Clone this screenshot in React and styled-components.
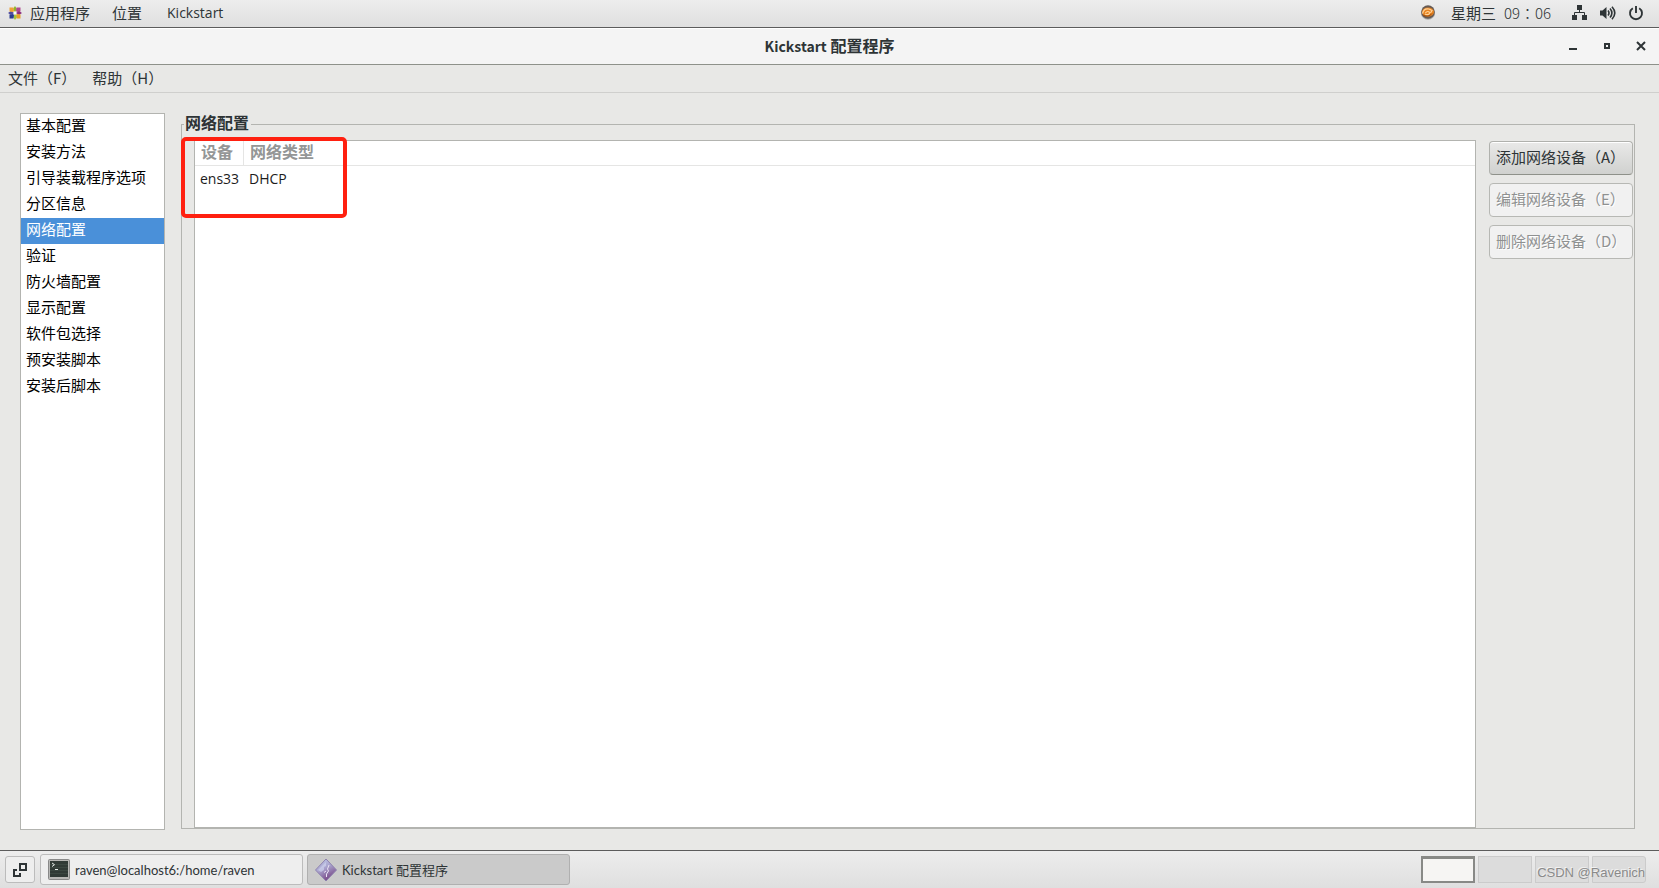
import React from "react";
import styled, { createGlobalStyle } from "styled-components";

const latin = `"Open Sans", "Noto Sans CJK SC", sans-serif`;
const cjk = `"Noto Sans CJK SC", sans-serif`;

const GlobalStyle = createGlobalStyle`
  * { box-sizing: border-box; }
  body { margin: 0; background: #e8e8e6; color: #2e3436; font: 15px/20px ${cjk}; }
  button { font: inherit; color: inherit; margin: 0; cursor: default; }
`;

const Desktop = styled.div`
  display: flex;
  flex-direction: column;
  min-height: 100vh;
`;

const TopPanel = styled.header`
  display: flex;
  align-items: center;
  height: 28px;
  padding: 0 15px 2px 8px;
  background: linear-gradient(#ededed, #dfdfdf);
  border-bottom: 1px solid #5c5c5c;
`;

const PanelButton = styled.button`
  display: flex;
  align-items: center;
  gap: 8px;
  padding: 0;
  margin-right: ${(p) => p.$after || 0}px;
  border: 0;
  background: none;
`;

const Latin = styled.span`
  font-family: ${latin};
  font-size: 14px;
`;

const Tray = styled.div`
  display: flex;
  align-items: center;
  margin-left: auto;
`;

const TitleBar = styled.div`
  display: grid;
  grid-template-columns: 1fr auto 1fr;
  align-items: center;
  height: 37px;
  padding: 0 11px 2px;
  background: #f4f4f4;
  border-top: 1px solid #fff;
  border-bottom: 1px solid #8e918a;
`;

const WindowTitle = styled.h1`
  grid-column: 2;
  margin: 0;
  font: 700 16px/20px ${cjk};
`;

const TitleLatin = styled.span`
  font-size: 14px;
`;

const WindowControls = styled.div`
  display: flex;
  justify-content: flex-end;
  gap: 20px;
`;

const ControlButton = styled.button`
  display: flex;
  padding: 0;
  border: 0;
  background: none;
`;

const MenuBar = styled.nav`
  display: flex;
  gap: 16px;
  height: 28px;
  padding: 0 8px;
  border-bottom: 1px solid #cfcfcd;
`;

const MenuItem = styled.button`
  padding: 0 0 2px;
  border: 0;
  background: none;
`;

const Content = styled.main`
  display: flex;
  flex: 1;
  gap: 16px;
  padding: 20px 24px 20px 20px;
`;

const SideList = styled.ul`
  flex: none;
  width: 145px;
  margin: 0;
  padding: 0;
  list-style: none;
  background: #fff;
  border: 1px solid #b3b4b0;
`;

const SideItem = styled.li`
  display: flex;
`;

const SideButton = styled.button`
  flex: 1;
  height: 26px;
  padding: 0 5px 4px;
  border: 0;
  text-align: left;
  white-space: nowrap;
  color: ${(p) => (p.$active ? "#fff" : "#000")};
  background: ${(p) => (p.$active ? "#4a90d9" : "#fff")};
`;

const Frame = styled.fieldset`
  position: relative;
  display: flex;
  flex: 1;
  gap: 13px;
  min-width: 0;
  margin: 0 0 1px;
  padding: 4px 1px 0 12px;
  border: 1px solid #b3b4b0;
`;

const Legend = styled.legend`
  margin-left: -10px;
  padding: 0 2px 5px 1px;
  font-size: 16px;
  font-weight: 700;
  line-height: 18px;
`;

const TreeBox = styled.div`
  flex: 1;
  background: #fff;
  border: 1px solid #b3b4b0;
`;

const DeviceTable = styled.table`
  width: 100%;
  border-collapse: separate;
  border-spacing: 0;
`;

const HeadCell = styled.th`
  width: ${(p) => p.$width || "auto"};
  height: 25px;
  padding: 0 5px 4px 6px;
  border-bottom: 1px solid #e5e5e4;
  border-right: ${(p) => (p.$width ? "1px solid #e5e5e4" : "0")};
  text-align: left;
  font-size: 16px;
  line-height: 20px;
  color: #949696;
  white-space: nowrap;
`;

const Cell = styled.td`
  height: 26px;
  padding: 0 4px 0 5px;
  font: 14px/20px ${latin};
  color: #1c1c1c;
`;

const ButtonColumn = styled.div`
  display: flex;
  flex-direction: column;
  gap: 8px;
  width: 144px;
  padding-top: 1px;
`;

const ActionButton = styled.button`
  height: 34px;
  padding: 0 6px 2px;
  text-align: left;
  white-space: nowrap;
  border: 1px solid #b0b1ad;
  border-bottom-color: #8e918a;
  border-radius: 4px;
  background: linear-gradient(#e9e9e8, #d0d1cf);
  box-shadow: inset 0 1px #fff;

  &:disabled {
    color: #8f9191;
    border-color: #b7b8b4;
    background: #f1f1f1;
    box-shadow: none;
    text-shadow: 1px 1px #fff;
  }
`;

const Highlight = styled.div`
  position: absolute;
  top: 1px;
  left: -1px;
  width: 166px;
  height: 81px;
  border: 4px solid #ff2010;
  border-radius: 5px;
  pointer-events: none;
`;

const TaskBar = styled.footer`
  display: flex;
  align-items: center;
  gap: 4px;
  height: 38px;
  padding: 0 13px 0 5px;
  background: linear-gradient(#ededed, #dfdfdf);
  border-top: 1px solid #5c5c5c;
`;

const DesktopButton = styled.button`
  display: grid;
  place-items: center;
  width: 30px;
  height: 27px;
  margin-right: 1px;
  padding: 0;
  border: 1px solid #bcbcbc;
  border-radius: 3px;
  background: #eee;
`;

const TaskButton = styled.button`
  display: flex;
  align-items: center;
  gap: 5px;
  width: 263px;
  height: 31px;
  padding: 0 7px;
  border: 1px solid ${(p) => (p.$active ? "#b0b0b0" : "#bcbcbc")};
  border-radius: 3px;
  background: ${(p) => (p.$active ? "#cacaca" : "#eee")};
  font: 13px/18px Lato, ${cjk};
`;

const Switcher = styled.div`
  position: relative;
  display: flex;
  gap: 3px;
  margin-left: auto;
`;

const Workspace = styled.button`
  width: 54px;
  height: 27px;
  padding: 0;
  border: 1px solid #cbcbcb;
  background: #dcdcdc;
  ${(p) => p.$active && "border: 2px solid #888986; border-top-width: 3px; background: #f6f5f3;"}

  &:nth-of-type(4) {
    border-radius: 0 3px 3px 0;
  }
`;

const Watermark = styled.span`
  position: absolute;
  right: 1px;
  bottom: 0;
  font: 13px/20px "Liberation Sans", sans-serif;
  color: #8a8a8a;
  text-shadow: -1px -1px #f2f2f2;
  white-space: nowrap;
  pointer-events: none;
`;

const TrayItem = styled.button`
  display: flex;
  gap: 8px;
  padding: 0;
  margin-left: ${(p) => p.$before}px;
  border: 0;
  background: none;
`;

const Time = styled.span`
  font-family: "Noto Sans CJK TC", sans-serif;
  font-weight: 300;
`;

const AppsIcon = () => (
  <svg width="14" height="14" viewBox="0 0 14 14">
    <path d="M7 0l2 3-2 3-2-3z" fill="#8db62c" />
    <path d="M12.500 1.500v4L9 6l-1-1 .5-3.500z" fill="#b04a8e" />
    <path d="M14 7l-3 2-3-2 3-2z" fill="#8a2c7c" />
    <path d="M12.500 12.500h-4L8 9l1-1 3.500.5z" fill="#e8a02c" />
    <path d="M7 14l-2-3 2-3 2 3z" fill="#a5c43a" />
    <path d="M1.500 12.500v-4L5 8l1 1-.5 3.500z" fill="#2b3d8f" />
    <path d="M0 7l3-2 3 2-3 2z" fill="#4c4aa0" />
    <path d="M1.500 1.500h4L6 5 5 6l-3.500-.5z" fill="#f0a235" />
    <path d="M7 5.500L8.500 7 7 8.500 5.500 7z" fill="#fff" />
  </svg>
);

const UpdateIcon = () => (
  <svg width="14" height="15" viewBox="0 0 14 15">
    <ellipse cx="7" cy="8" rx="7" ry="6.8" fill="#aaa" />
    <circle cx="7" cy="7" r="6.8" fill="#675b54" />
    <ellipse cx="7" cy="7" rx="6" ry="4.600" fill="#e88422" />
    <path d="M1.500 8.500c1-4 4-5 6.500-4.500M4.500 8c1-2 4-2 4 0s-3 2-4.500 1M8 4l3 1.500-1.500 2.500" fill="none" stroke="#ffd49a" strokeWidth="1.200" />
    <path d="M2 10c2 1.500 7 1.500 9-1.500" fill="none" stroke="#a34e0c" />
  </svg>
);

const NetworkIcon = () => (
  <svg width="15" height="15" viewBox="0 0 15 15">
    <path d="M5 0h5v5H5zM0 10h5v5H0zM10 10h5v5h-5z" fill="#2e3436" />
    <path d="M7.5 5v3M2.5 10.500V7.500h10V10.500" fill="none" stroke="#2e3436" />
  </svg>
);

const VolumeIcon = () => (
  <svg width="16" height="14" viewBox="0 0 16 14">
    <path d="M0 4.500h2.500L6.500 1v12L2.500 9.500H0z" fill="#2e3436" />
    <path d="M8 4.500q2 2.500 0 5M10 2.500q3.800 4.500 0 9M12 .7q5.600 6.300 0 12.600" fill="none" stroke="#2e3436" strokeWidth="1.600" />
  </svg>
);

const PowerIcon = () => (
  <svg width="16" height="16" viewBox="0 0 16 16">
    <path d="M4.800 3.200a6 6 0 1 0 6.400 0M8 1v7" fill="none" stroke="#2e3436" strokeWidth="1.900" />
  </svg>
);

const ControlIcon = ({ d }) => (
  <svg width="14" height="14" viewBox="0 0 14 14">
    <path d={d} fill="none" stroke="#2e3436" strokeWidth="2" />
  </svg>
);

const WindowsIcon = () => (
  <svg width="14" height="14" viewBox="0 0 14 14">
    <path d="M7 1h6v6H7zM4 7H1v6h6v-3" fill="none" stroke="#2e3436" strokeWidth="2" />
  </svg>
);

const TerminalIcon = () => (
  <svg width="22" height="21" viewBox="0 0 22 21">
    <rect x=".5" y=".5" width="21" height="20" rx="1" fill="#b8b8b6" stroke="#898989" />
    <rect x="2" y="2" width="18" height="16" fill="#303a36" />
    <path d="M2 5.500h18M2 8.500h18M2 11.500h18M2 14.500h18" stroke="#3b4741" />
    <path d="M4 4l2.500 1.700L4 7.500M7 10.500h3" fill="none" stroke="#e8eeea" />
  </svg>
);

const KickstartIcon = () => (
  <svg width="22" height="24" viewBox="0 0 22 24">
    <defs>
      <linearGradient id="gem" x1="0" y1="0" x2="0.500" y2="1">
        <stop offset="0" stopColor="#c4d2ef" />
        <stop offset=".5" stopColor="#a9a3cd" />
        <stop offset="1" stopColor="#774786" />
      </linearGradient>
    </defs>
    <path d="M11 1l10.500 11L11 23 .5 12z" fill="url(#gem)" stroke="#8d80ae" />
    <path d="M3 12l8-8v4l-2 1v3l-3 2z" fill="#d3d9f2" opacity=".6" />
    <path d="M14 7l-1.500 4 1 2-2 3v3M11 13l-2 1.500" fill="none" stroke="#e9e2f3" />
  </svg>
);

const sections = [
  "基本配置",
  "安装方法",
  "引导装载程序选项",
  "分区信息",
  "网络配置",
  "验证",
  "防火墙配置",
  "显示配置",
  "软件包选择",
  "预安装脚本",
  "安装后脚本",
];

export default function App() {
  return (
    <Desktop>
      <GlobalStyle />
      <TopPanel>
        <PanelButton $after={22}>
          <AppsIcon />
          应用程序
        </PanelButton>
        <PanelButton $after={25}>位置</PanelButton>
        <PanelButton>
          <Latin>Kickstart</Latin>
        </PanelButton>
        <Tray>
          <TrayItem $before={0} aria-label="软件更新"><UpdateIcon /></TrayItem>
          <TrayItem $before={16}>
            <span>星期三</span>
            <Time>09：06</Time>
          </TrayItem>
          <TrayItem $before={21} aria-label="网络"><NetworkIcon /></TrayItem>
          <TrayItem $before={13} aria-label="音量"><VolumeIcon /></TrayItem>
          <TrayItem $before={12} aria-label="电源"><PowerIcon /></TrayItem>
        </Tray>
      </TopPanel>

      <TitleBar>
        <WindowTitle>
          <TitleLatin>Kickstart</TitleLatin> 配置程序
        </WindowTitle>
        <WindowControls>
          <ControlButton aria-label="最小化"><ControlIcon d="M3 10h8" /></ControlButton>
          <ControlButton aria-label="最大化"><ControlIcon d="M5 5h4v4H5z" /></ControlButton>
          <ControlButton aria-label="关闭"><ControlIcon d="M3 3l8 8M11 3l-8 8" /></ControlButton>
        </WindowControls>
      </TitleBar>

      <MenuBar>
        <MenuItem>文件（F）</MenuItem>
        <MenuItem>帮助（H）</MenuItem>
      </MenuBar>

      <Content>
        <SideList>
          {sections.map((name) => (
            <SideItem key={name}>
              <SideButton $active={name === "网络配置"}>{name}</SideButton>
            </SideItem>
          ))}
        </SideList>
        <Frame>
          <Legend>网络配置</Legend>
          <TreeBox>
            <DeviceTable>
              <thead>
                <tr>
                  <HeadCell $width="49px">设备</HeadCell>
                  <HeadCell>网络类型</HeadCell>
                </tr>
              </thead>
              <tbody>
                <tr>
                  <Cell>ens33</Cell>
                  <Cell>DHCP</Cell>
                </tr>
              </tbody>
            </DeviceTable>
          </TreeBox>
          <ButtonColumn>
            <ActionButton>添加网络设备（A）</ActionButton>
            <ActionButton disabled>编辑网络设备（E）</ActionButton>
            <ActionButton disabled>删除网络设备（D）</ActionButton>
          </ButtonColumn>
          <Highlight />
        </Frame>
      </Content>

      <TaskBar>
        <DesktopButton aria-label="显示桌面"><WindowsIcon /></DesktopButton>
        <TaskButton>
          <TerminalIcon />
          raven@localhost6:/home/raven
        </TaskButton>
        <TaskButton $active>
          <KickstartIcon />
          Kickstart 配置程序
        </TaskButton>
        <Switcher>
          <Workspace $active aria-label="工作区 1" />
          <Workspace aria-label="工作区 2" />
          <Workspace aria-label="工作区 3" />
          <Workspace aria-label="工作区 4" />
          <Watermark>CSDN @Ravenich</Watermark>
        </Switcher>
      </TaskBar>
    </Desktop>
  );
}
